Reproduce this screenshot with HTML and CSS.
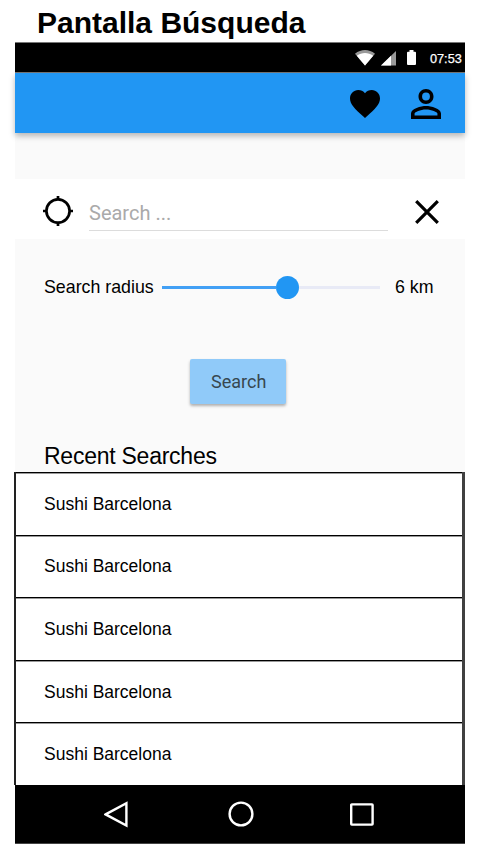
FILE: index.html
```html
<!DOCTYPE html>
<html lang="es">
<head>
<meta charset="utf-8">
<title>Pantalla Búsqueda</title>
<link rel="stylesheet" href="styles.css">
</head>
<body>
<h1 class="title">Pantalla Búsqueda</h1>
<main class="phone">
  <div class="status">
    <svg class="wifi" width="20" height="16" viewBox="0 0 20 16"><path d="M0 3.8C6-1.2 14-1.2 20 3.8L10 15.5Z" fill="#999"/><path d="M1.8 5.8C7 2.2 13 2.2 18.2 5.8L10 15.5Z" fill="#fff"/></svg>
    <svg class="signal" width="15" height="15" viewBox="0 0 15 15"><path d="M15 0V14.5H0Z" fill="#999"/><path d="M10 4.8V14.5H0Z" fill="#fff"/></svg>
    <svg class="battery" width="9" height="16" viewBox="0 0 9 16"><path d="M2.5 0h4v1.7H8q1 0 1 1V14q0 1-1 1H1q-1 0-1-1V2.7q0-1 1-1h1.5Z" fill="#fff"/></svg>
    <span class="clock">07:53</span>
  </div>
  <header class="appbar">
    <svg width="30" height="28" viewBox="2 3 20 18.35" preserveAspectRatio="none"><path d="M12 21.35l-1.45-1.32C5.4 15.36 2 12.28 2 8.5 2 5.42 4.42 3 7.5 3c1.74 0 3.41.81 4.5 2.09C13.09 3.81 14.76 3 16.5 3 19.58 3 22 5.42 22 8.5c0 3.78-3.4 6.86-8.55 11.54L12 21.35z"/></svg>
    <svg width="30" height="30" viewBox="4 4 16 16"><path d="M12 5.9a2.1 2.1 0 1 1 0 4.2 2.1 2.1 0 0 1 0-4.2m0 9c2.97 0 6.1 1.46 6.1 2.1v1.1H5.9V17c0-.64 3.13-2.1 6.1-2.1M12 4C9.79 4 8 5.79 8 8s1.79 4 4 4 4-1.79 4-4-1.79-4-4-4zm0 9c-2.67 0-8 1.34-8 4v3h16v-3c0-2.66-5.33-4-8-4z"/></svg>
  </header>
  <section class="searchbar">
    <svg width="30" height="30" viewBox="0 0 30 30" fill="none" stroke="#000" stroke-width="2.7"><circle cx="15" cy="15" r="11.6"/><path d="M15 0v4M15 26v4M0 15h4M26 15h4"/></svg>
    <div class="field">Search ...</div>
    <svg class="close" width="24" height="24" viewBox="0 0 24 24" stroke="#000" stroke-width="3.2"><path d="M1.2 1.2L22.8 22.8M22.8 1.2L1.2 22.8"/></svg>
  </section>
  <section class="radius">
    <span class="label">Search radius</span>
    <div class="track"><div class="filled"></div><div class="thumb"></div><div class="rest"></div></div>
    <span class="value">6 km</span>
  </section>
  <div class="button">Search</div>
  <h2 class="heading">Recent Searches</h2>
  <ul class="list">
    <li>Sushi Barcelona</li>
    <li>Sushi Barcelona</li>
    <li>Sushi Barcelona</li>
    <li>Sushi Barcelona</li>
    <li>Sushi Barcelona</li>
  </ul>
  <nav class="nav">
    <svg width="24" height="28" viewBox="0 0 24 28"><path d="M1.6 14.4L22.4 3.2V25.5Z"/></svg>
    <svg width="26" height="26" viewBox="0 0 26 26"><circle cx="13" cy="13" r="11.4"/></svg>
    <svg width="24" height="24" viewBox="0 0 24 24"><rect x="1.2" y="2.4" width="21.4" height="20.2" rx=".6"/></svg>
  </nav>
</main>
</body>
</html>
```
FILE: styles.css
```css
* { box-sizing: border-box; }
body {
  margin: 0;
  background: #fff;
  color: #000;
  font-family: "Liberation Sans", Arial, sans-serif;
  font-size: 17.5px;
}
svg { display: block; flex: none; }
.title {
  margin: 0;
  height: 42px;
  padding: 3px 0 0 37px;
  font-size: 30px;
  line-height: 39px;
  white-space: nowrap;
}
.phone {
  width: 451px;
  height: 802px;
  margin-left: 14px;
  display: flex;
  flex-direction: column;
  background: linear-gradient(to right, #fff 1px, #fafafa 1px);
}
.status {
  height: 31px;
  display: flex;
  align-items: flex-start;
  margin-left: 1px;
  padding: 7px 0 0 340px;
  background: #000;
  border-top: 1px solid #777;
  border-bottom: 1px solid #777;
}
.signal { margin: 1px 0 0 6px; }
.battery { margin-left: 11px; }
.clock {
  margin-left: 14px;
  color: #fff;
  font-size: 12.7px;
  line-height: 18px;
  -webkit-text-stroke: .25px #fff;
}
.appbar {
  height: 60px;
  flex: none;
  display: flex;
  justify-content: flex-end;
  align-items: center;
  gap: 31px;
  margin-left: 1px;
  padding: 1px 24px 0 0;
  background: #2196f3;
  box-shadow: 0 3px 6px rgba(0, 0, 0, .28);
}
.searchbar {
  height: 60px;
  flex: none;
  display: flex;
  align-items: flex-start;
  margin-top: 46px;
  padding: 17px 0 0 29px;
  background: #fff;
}
.field {
  width: 299px;
  height: 36px;
  margin: -1px 0 0 16px;
  border-bottom: 1px solid #dcdcdc;
  color: #aaa;
  font: 20px/36px Roboto, sans-serif;
}
.close { margin: 4px 0 0 27px; }
.radius {
  height: 24px;
  display: flex;
  align-items: center;
  margin-top: 36px;
  padding-left: 30px;
}
.label { width: 118px; font-size: 17.8px; }
.value { font-size: 17.8px; }
.track { width: 218px; display: flex; align-items: center; margin-right: 15px; }
.filled { width: 114px; height: 3px; background: #42a0f5; }
.thumb { width: 23px; height: 23px; border-radius: 50%; background: #2196f3; }
.rest { flex: 1; height: 3px; background: #e8eaf6; }
.button {
  width: 96px;
  height: 45px;
  flex: none;
  margin: 60px 0 0 176px;
  border-radius: 2px;
  background: #90caf9;
  box-shadow: 0 2px 3px rgba(0, 0, 0, .3);
  color: #37474f;
  font: 18px/46px Roboto, sans-serif;
  padding-left: 21px;
}
.heading {
  height: 68px;
  flex: none;
  margin: 0;
  padding: 38px 0 0 30px;
  font-size: 23px;
  letter-spacing: -.25px;
  line-height: 28px;
  font-weight: 400;
}
.list {
  height: 313px;
  flex: none;
  display: grid;
  grid-template-rows: repeat(5, 1fr);
  list-style: none;
  margin: 0;
  padding: 0;
  border-left: 2px solid #222;
  border-right: 3px solid #404040;
  background: #fff;
}
.list li {
  display: flex;
  align-items: center;
  padding: 1px 0 0 28px;
  border-top: 1px solid #000;
  box-shadow: inset 0 1px #999;
}
.nav {
  height: 59px;
  flex: none;
  display: flex;
  align-items: center;
  gap: 100px;
  margin-left: 1px;
  padding-left: 89px;
  background: #000;
  border-bottom: 1px solid #444;
}
.nav svg { fill: none; stroke: #fff; stroke-width: 2.4; }
.nav svg:last-child { margin-left: -4px; }
```
